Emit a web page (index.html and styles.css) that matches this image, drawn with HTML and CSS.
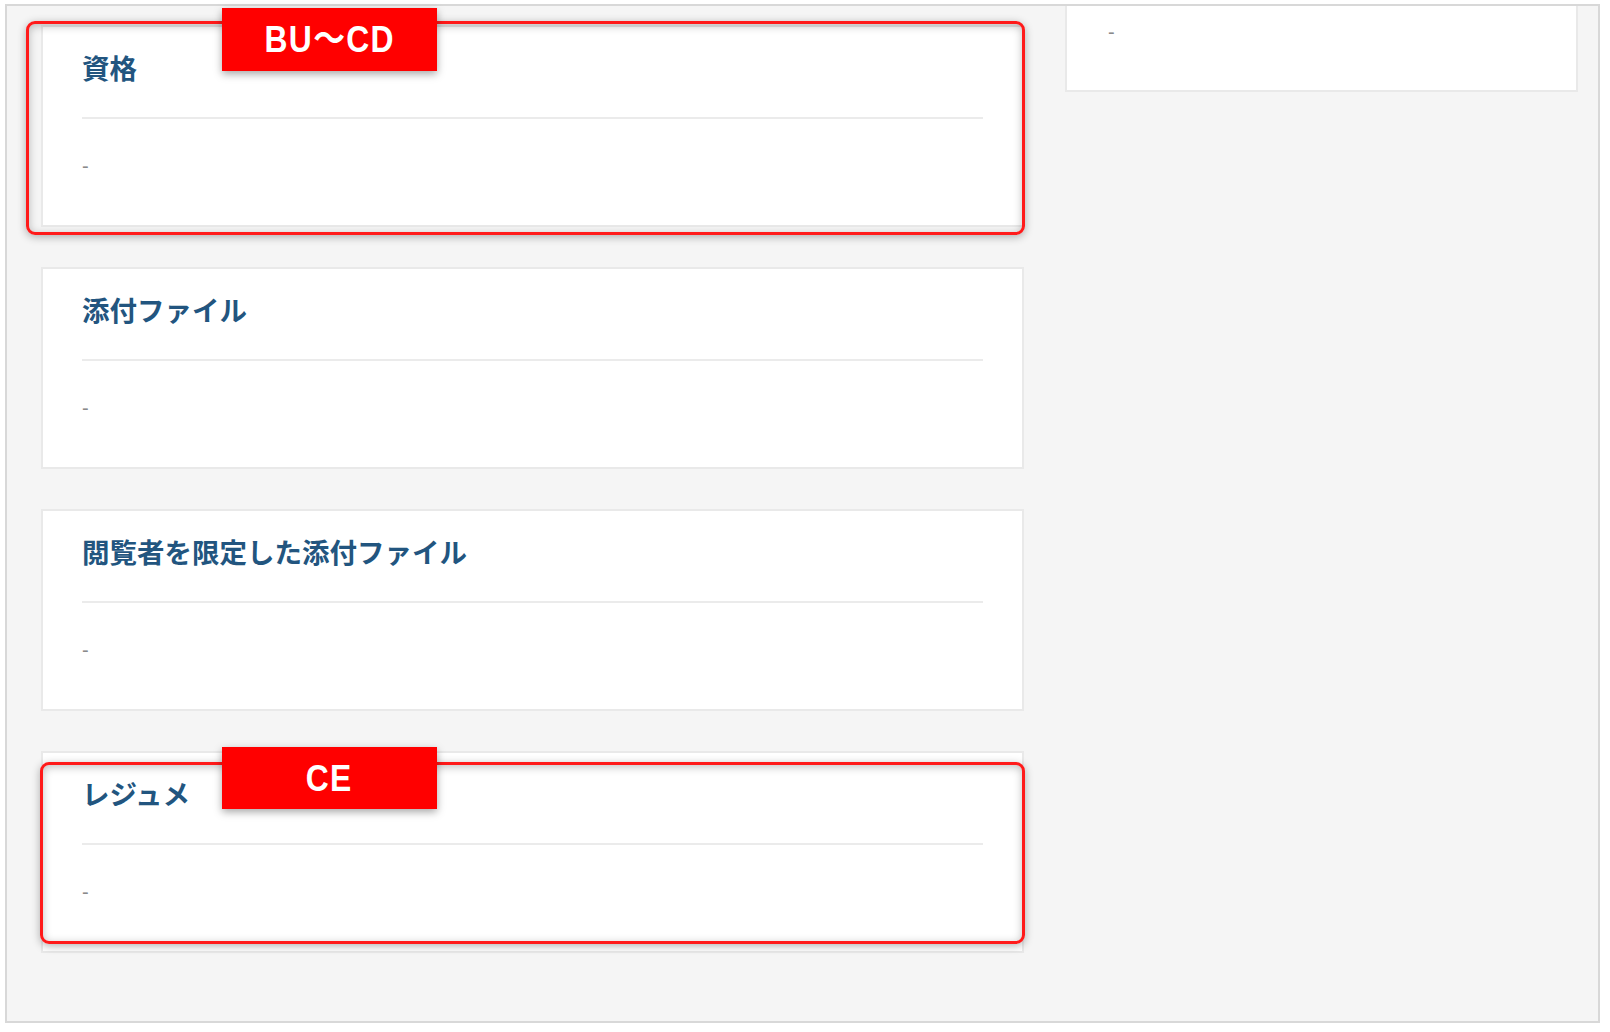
FILE: index.html
```html
<!DOCTYPE html>
<html lang="ja">
<head>
<meta charset="utf-8">
<title>Resume detail</title>
<link rel="stylesheet" href="styles.css">
</head>
<body>
<div class="frame">
  <div class="layout">
    <div class="col-main">
      <section class="card">
        <h2 class="card-title">資格</h2>
        <div class="card-body">-</div>
      </section>
      <section class="card">
        <h2 class="card-title">添付ファイル</h2>
        <div class="card-body">-</div>
      </section>
      <section class="card">
        <h2 class="card-title">閲覧者を限定した添付ファイル</h2>
        <div class="card-body">-</div>
      </section>
      <section class="card">
        <h2 class="card-title">レジュメ</h2>
        <div class="card-body">-</div>
      </section>
    </div>
    <div class="col-side">
      <section class="card card-side">
        <div class="card-body side-body">-</div>
      </section>
    </div>
  </div>
</div>

<div class="mark mark-1"></div>
<div class="mark mark-2"></div>
<div class="tag tag-1"><span class="tag-text">BU〜CD</span></div>
<div class="tag tag-2"><span class="tag-text">CE</span></div>
</body>
</html>
```

FILE: styles.css
```css
html, body {
  margin: 0;
  padding: 0;
  background: #ffffff;
}

body {
  position: relative;
  width: 1610px;
  height: 1032px;
  overflow: hidden;
  font-family: "Noto Sans CJK JP", "Liberation Sans", sans-serif;
}

.frame {
  box-sizing: border-box;
  margin: 4px 10px 0 5px;
  height: 1019px;
  border: 2px solid #d8d8d8;
  background: #f5f5f5;
  overflow: hidden;
}

.layout {
  display: flex;
  gap: 41px;
  padding: 19px 0 0 34px;
}

.col-main {
  width: 983px;
  display: flex;
  flex-direction: column;
  gap: 40px;
}

.col-side {
  width: 513px;
  margin-top: -19px;
}

.card {
  box-sizing: border-box;
  height: 202px;
  background: #ffffff;
  border: 2px solid #e9e9e9;
  padding: 0 39px;
}

.card-title {
  margin: 0;
  padding-top: 20px;
  padding-bottom: 30px;
  height: 40px;
  line-height: 40px;
  font-size: 27.5px;
  font-weight: 700;
  color: #22557f;
  border-bottom: 2px solid #ebebeb;
}

.card-body {
  padding-top: 32px;
  line-height: 30px;
  font-family: "Liberation Sans", sans-serif;
  font-size: 20px;
  color: #8a8a8a;
}

.card-side {
  height: 86px;
  border-top: none;
  padding: 0 41px;
}

.side-body {
  padding-top: 11px;
}

/* annotation overlays */
.mark {
  position: absolute;
  box-sizing: border-box;
  border: 3px solid #ff1a1a;
  border-radius: 9px;
  box-shadow: 0 2px 8px rgba(0, 0, 0, 0.3), inset 0 2px 8px rgba(0, 0, 0, 0.25);
}

.mark-1 {
  left: 26px;
  top: 21px;
  width: 999px;
  height: 214px;
}

.mark-2 {
  left: 40px;
  top: 762px;
  width: 985px;
  height: 182px;
}

.tag {
  position: absolute;
  left: 222px;
  width: 215px;
  height: 63px;
  background: #ff0000;
  color: #ffffff;
  display: flex;
  align-items: center;
  justify-content: center;
  box-shadow: 0 3px 8px rgba(0, 0, 0, 0.35);
}

.tag-text {
  display: inline-block;
  font-family: "Liberation Sans", "Noto Sans CJK JP", sans-serif;
  font-weight: 700;
  font-size: 37px;
  line-height: 1;
  letter-spacing: 1.5px;
  transform: scaleX(0.86);
}

.tag-1 {
  top: 8px;
}

.tag-2 {
  top: 747px;
  height: 62px;
}
```
